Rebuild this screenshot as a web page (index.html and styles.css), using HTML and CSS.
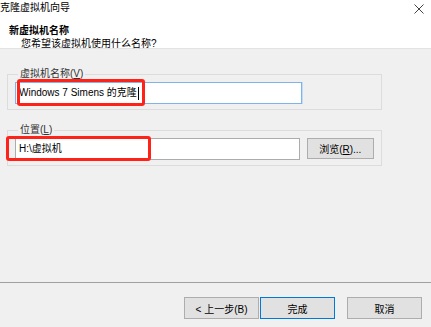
FILE: index.html
```html
<!DOCTYPE html>
<html lang="zh-CN">
<head>
  <meta charset="UTF-8">
  <title>克隆虚拟机向导</title>
  <link rel="stylesheet" href="styles.css">
</head>
<body>
  <div class="dialog">
    <div class="header">
      <div class="title-row">
        <span class="title">克隆虚拟机向导</span>
        <svg class="close" width="10" height="10" viewBox="0 0 10 10">
          <path d="M0.5 0.5 L9.5 9.5 M9.5 0.5 L0.5 9.5" stroke="#444" stroke-width="1" fill="none"/>
        </svg>
      </div>
      <div class="heading">新虚拟机名称</div>
      <div class="sub">您希望该虚拟机使用什么名称?</div>
    </div>

    <div class="main">
      <fieldset class="group">
        <legend>虚拟机名称(<u>V</u>)</legend>
        <div class="field">
          <div class="input focused">Windows 7 Simens 的克隆<span class="caret"></span></div>
          <div class="mark mark-name"></div>
        </div>
      </fieldset>

      <fieldset class="group">
        <legend>位置(<u>L</u>)</legend>
        <div class="row">
          <div class="field">
            <div class="input">H:\虚拟机</div>
            <div class="mark mark-path"></div>
          </div>
          <button class="btn browse">浏览(<u>R</u>)...</button>
        </div>
      </fieldset>
    </div>

    <div class="footer">
      <div class="pair">
        <button class="btn">&lt; 上一步(B)</button>
        <button class="btn primary">完成</button>
      </div>
      <button class="btn">取消</button>
    </div>
  </div>
</body>
</html>
```

FILE: styles.css
```css
body {
  margin: 0;
  font-family: 'Liberation Sans', 'Noto Sans CJK SC', sans-serif;
  font-size: 10px;
  color: #000;
  background-color: #f0f0f0;
}
.dialog {
  width: 431px;
  height: 327px;
  display: flex;
  flex-direction: column;
  overflow: hidden;
}
.header {
  background-color: #fff;
  border-bottom: 1px solid #e3e3e3;
  box-sizing: border-box;
  height: 49px;
}
.title-row {
  display: flex;
  justify-content: space-between;
  align-items: center;
  height: 13px;
  padding: 1px 7px 0 0;
}
.title {
  line-height: 13px;
}
.close {
  display: block;
  margin-top: 2px;
}
.heading {
  font-weight: bold;
  margin: 10px 0 0 9px;
  line-height: 13px;
}
.sub {
  margin-left: 21px;
  line-height: 13px;
}
.main {
  flex: 1;
  display: flex;
  flex-direction: column;
  gap: 13px;
  padding-top: 18px;
}
.group {
  margin: 0 49px 0 7px;
  padding: 1px 7px 5px 7px;
  border: 1px solid #dcdcdc;
  border-radius: 0;
  min-width: 0;
}
.group legend {
  padding: 0 2px;
  margin-left: 3px;
  line-height: 14px;
  color: #333;
}
.row {
  display: flex;
  gap: 7px;
}
.field {
  position: relative;
  width: 287px;
}
.input {
  height: 22px;
  box-sizing: border-box;
  border: 1px solid #acacac;
  background-color: #fff;
  padding: 0 3px;
  line-height: 20px;
  display: flex;
  align-items: center;
}
.input.focused {
  border-color: #7eb4ea;
  box-shadow: 1px 0 0 #c4ddf5;
}
.caret {
  display: inline-block;
  width: 1px;
  height: 13px;
  background-color: #000;
  margin-left: 1px;
}
.mark {
  position: absolute;
  border: 3px solid #ff2218;
  border-radius: 3px;
  box-sizing: border-box;
}
.mark-name {
  left: 2px;
  top: -3px;
  width: 128px;
  height: 27px;
}
.mark-path {
  left: -9px;
  top: -2px;
  width: 145px;
  height: 25px;
}
.btn {
  font-family: 'Liberation Sans', 'Noto Sans CJK SC', sans-serif;
  font-size: 10px;
  color: #000;
  background-color: #e1e1e1;
  border: 1px solid #adadad;
  height: 22px;
  width: 75px;
  padding: 0;
  margin: 0;
}
.browse {
  width: 68px;
  height: 21px;
}
.footer {
  height: 45px;
  box-sizing: border-box;
  border-top: 1px solid #a0a0a0;
  display: flex;
  justify-content: flex-end;
  align-items: flex-start;
  gap: 12px;
  padding: 14px 9px 0 0;
}
.pair {
  display: flex;
  gap: 1px;
}
.primary {
  border-color: #0078d7;
}
```
